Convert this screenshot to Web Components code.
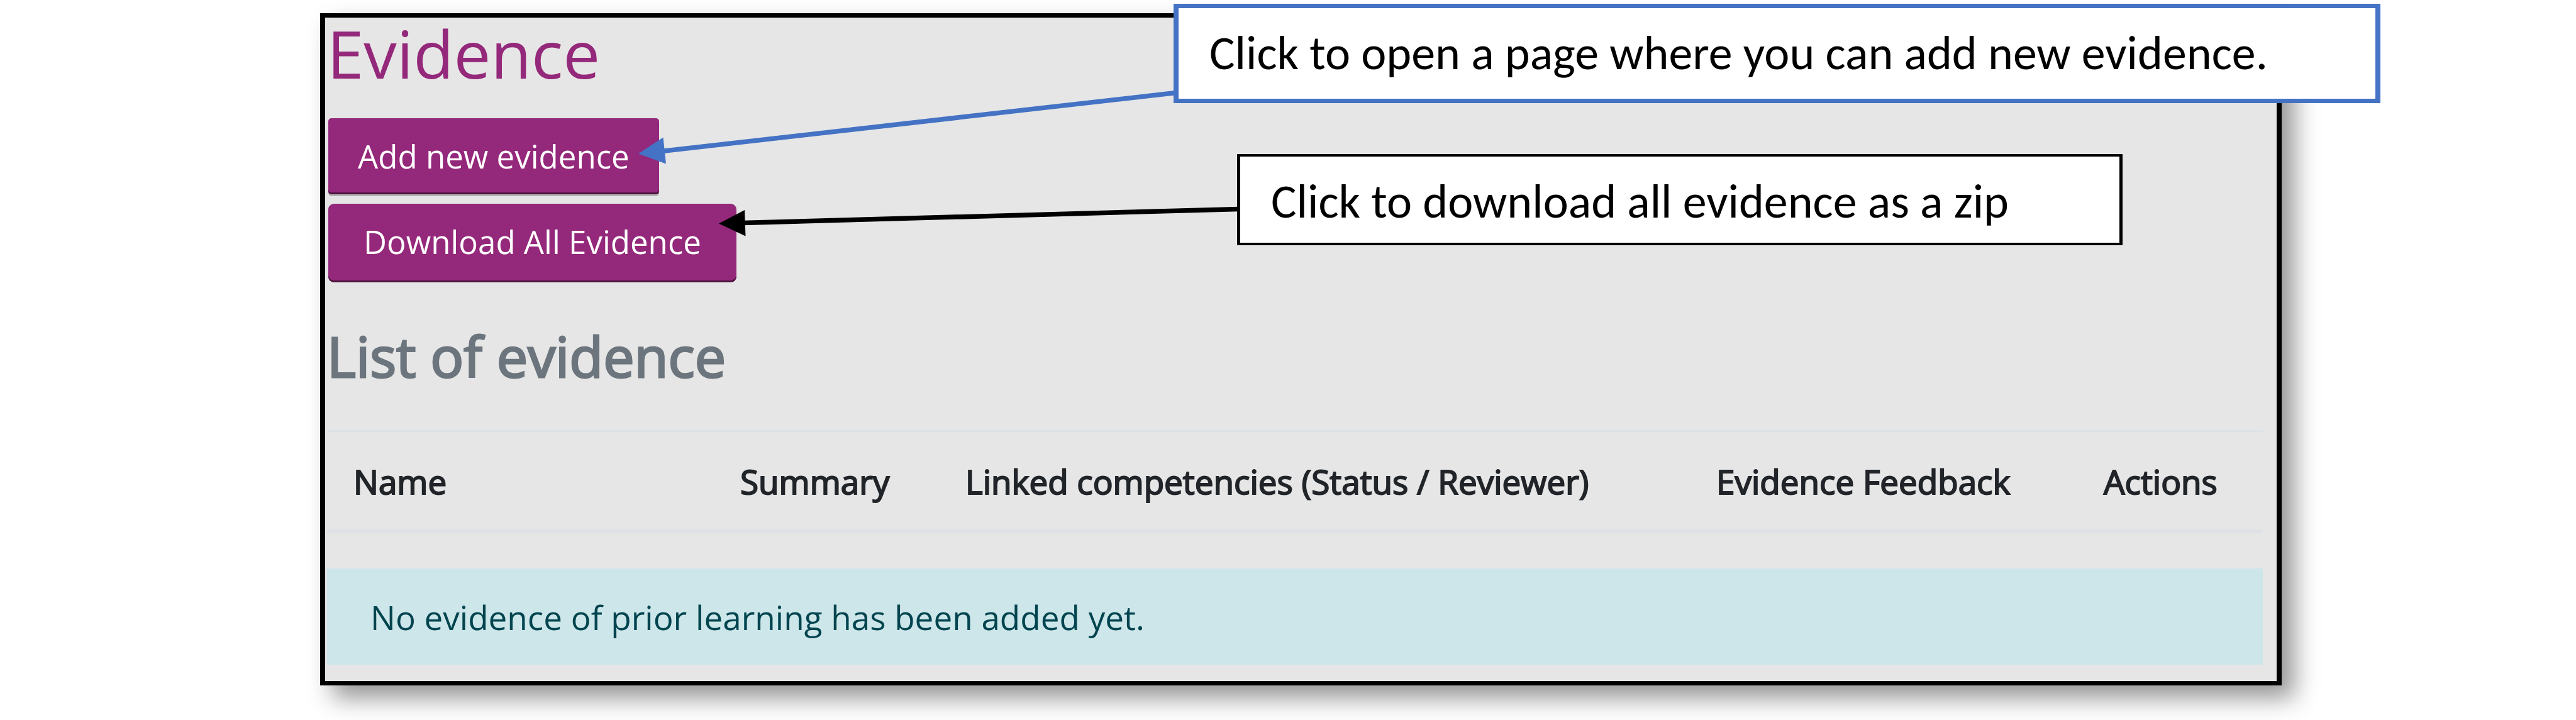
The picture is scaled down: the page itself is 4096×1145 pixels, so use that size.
<!DOCTYPE html>
<html lang="en">
<head>
<meta charset="utf-8">
<title>Evidence</title>
<style>
  body { margin: 0; background: #fff; font-family: "Open Sans", "Noto Sans", sans-serif; }
</style>
</head>
<body>
<annotated-figure>
  <evidence-panel>
    <panel-heading slot="title" level="1">Evidence</panel-heading>
    <action-button>Add new evidence</action-button>
    <action-button size="large">Download All Evidence</action-button>
    <panel-heading slot="list" level="2">List of evidence</panel-heading>
    <evidence-table slot="list"></evidence-table>
    <info-alert slot="list">No evidence of prior learning has been added yet.</info-alert>
  </evidence-panel>
  <callout-arrows slot="notes"></callout-arrows>
  <callout-box slot="notes" tone="blue">Click to open a page where you can add new evidence.</callout-box>
  <callout-box slot="notes" tone="black">Click to download all evidence as a zip</callout-box>
</annotated-figure>

<script>
const define = (name, html, setup) => customElements.define(name, class extends HTMLElement {
  connectedCallback() {
    if (this.shadowRoot) return;
    const root = this.attachShadow({ mode: 'open' });
    root.innerHTML = html;
    if (setup) setup(this, root);
  }
});

define('annotated-figure', `
  <style>
    :host { display: block; position: relative; box-sizing: border-box; padding: 21px 468px 55px 509px; }
  </style>
  <slot></slot><slot name="notes"></slot>`);

define('evidence-panel', `
  <style>
    :host { display: block; box-sizing: border-box; border: solid #000; border-width: 7px 8px;
            background: #e6e6e6; box-shadow: 20px 20px 36px rgba(0,0,0,.42); padding: 0 22px 26px 3px; }
    .actions { display: flex; flex-direction: column; align-items: flex-start; gap: 15px;
               padding: 46px 2px 57px; }
  </style>
  <slot name="title"></slot>
  <div class="actions"><slot></slot></div>
  <slot name="list"></slot>`);

define('panel-heading', `
  <style>
    :host { display: block; }
    h1, h2 { margin: 0; font-weight: 400; }
    h1 { font-size: 105px; line-height: 114px; color: #94287a; }
    h2 { font-size: 88px; line-height: 120px; color: #6c757d; -webkit-text-stroke: 3px #6c757d; }
  </style>`, (el, root) => {
  const h = document.createElement('h' + el.getAttribute('level'));
  h.append(document.createElement('slot'));
  root.append(h);
});

define('action-button', `
  <style>
    :host { display: block; }
    button { display: block; margin: 0; border: 0; border-radius: 5px; background: #94287a; color: #fff;
             font: 400 51px/71px "Open Sans", "Noto Sans", sans-serif; padding: 25px 47px;
             box-shadow: inset 0 -3px #4e153f, 0 3px rgba(0,0,0,.22); cursor: pointer; }
    :host([size="large"]) button { border-radius: 9px; padding: 25px 56px 29px;
             box-shadow: inset 0 -3px #4e153f; }
  </style>
  <button type="button"><slot></slot></button>`);

define('evidence-table', `
  <style>
    :host { display: block; margin: 58px 0 56px; }
    table { width: 100%; border-collapse: separate; border-spacing: 0; table-layout: fixed; }
    th { box-sizing: border-box; text-align: left; font-size: 53px; font-weight: 400; line-height: 71px;
         color: #212529; -webkit-text-stroke: 2px #212529; padding: 43px 0 41px 42px; white-space: nowrap;
         border-top: 3px solid #dde1e6; border-bottom: 6px solid #dde1e6; }
    .name { width: 615px; } .summary { width: 358px; } .linked { width: 1194px; }
    .feedback { width: 616px; } .actions { width: 295px; }
  </style>
  <table>
    <thead><tr>
      <th class="name" scope="col">Name</th>
      <th class="summary" scope="col">Summary</th>
      <th class="linked" scope="col">Linked competencies (Status / Reviewer)</th>
      <th class="feedback" scope="col">Evidence Feedback</th>
      <th class="actions" scope="col">Actions</th>
    </tr></thead>
  </table>`);

define('info-alert', `
  <style>
    :host { display: block; padding: 42px 69px 40px; background: #cde6e9;
            color: #00444f; font-size: 53px; line-height: 71px; }
  </style>
  <div role="status"><slot></slot></div>`);

define('callout-box', `
  <style>
    :host { display: block; position: absolute; box-sizing: border-box; background: #fff; color: #000;
            font: 400 76px/93px Carlito, Lato, sans-serif; white-space: nowrap; padding: 25px 49px 26px; }
    :host([tone="blue"]) { left: 1866px; right: 311px; top: 6px; border: solid #4472c4; border-width: 7px 8px; }
    :host([tone="black"]) { left: 1967px; right: 721px; top: 245px; border: solid #000; border-width: 4px 5px;
            padding-bottom: 19px; }
  </style>
  <slot></slot>`);

define('callout-arrows', `
  <style>
    :host { display: block; position: absolute; inset: 0; pointer-events: none; }
    svg { display: block; width: 100%; height: 100%; }
  </style>
  <svg viewBox="0 0 4096 1145" aria-hidden="true">
    <line x1="1052" y1="240.500" x2="1870" y2="147.500" stroke="#4472c4" stroke-width="7.500"/>
    <polygon points="1015,244.500 1054.500,218.500 1059,260.500" fill="#4472c4"/>
    <line x1="1180" y1="354.500" x2="1970" y2="332.500" stroke="#000" stroke-width="7.500"/>
    <polygon points="1143,355.500 1184,334 1185.500,375.500" fill="#000"/>
  </svg>`);
</script>
</body>
</html>
